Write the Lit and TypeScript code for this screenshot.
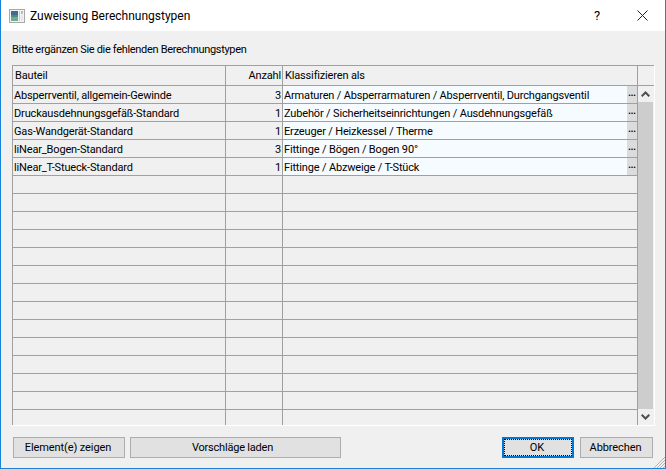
import { LitElement, html, css, svg } from "lit";
import { customElement } from "lit/decorators.js";

const ROWS: [string, string, string][] = [
  ["Absperrventil, allgemein-Gewinde", "3", "Armaturen / Absperrarmaturen / Absperrventil, Durchgangsventil"],
  ["Druckausdehnungsgefäß-Standard", "1", "Zubehör / Sicherheitseinrichtungen / Ausdehnungsgefäß"],
  ["Gas-Wandgerät-Standard", "1", "Erzeuger / Heizkessel / Therme"],
  ["liNear_Bogen-Standard", "3", "Fittinge / Bögen / Bogen 90°"],
  ["liNear_T-Stueck-Standard", "1", "Fittinge / Abzweige / T-Stück"],
];
const EMPTY = 14;

@customElement("app-root")
export class AppRoot extends LitElement {
  static styles = css`
    :host {
      display: block;
      width: 666px;
      height: 469px;
      font-family: Roboto, "Noto Sans", sans-serif;
      font-size: 11px;
      color: #000;
    }
    .window {
      position: relative;
      box-sizing: border-box;
      width: 666px;
      height: 469px;
      display: flex;
      flex-direction: column;
      background: #f0f0f0;
      border: 1px solid #1883d7;
      border-top: 0;
    }
    .titlebar {
      height: 31px;
      flex: none;
      background: #fff;
      display: flex;
      align-items: center;
      padding: 0 17px 0 8px;
    }
    .app-icon { width: 16px; height: 14px; flex: none; margin-right: 5px; }
    .title { flex: 1; font-size: 12px; white-space: nowrap; }
    .help { width: 12px; text-align: center; font-size: 13px; margin-right: 34px; }
    .close { width: 11px; height: 11px; flex: none; }
    .content {
      flex: 1;
      min-height: 0;
      display: flex;
      flex-direction: column;
      padding: 0 10px 10px 11px;
    }
    .hint {
      height: 34px;
      flex: none;
      display: flex;
      align-items: center;
      padding-top: 2px;
      box-sizing: border-box;
      letter-spacing: -0.32px;
      white-space: nowrap;
    }
    .table {
      width: 643px;
      height: 361px;
      flex: none;
      box-sizing: border-box;
      border-right: 1px solid #fff;
      border-bottom: 1px solid #fff;
      display: flex;
      flex-direction: column;
      overflow: hidden;
    }
    .header {
      display: grid;
      grid-template-columns: 213px 57px 355px 1fr;
      height: 21px;
      flex: none;
      box-sizing: border-box;
      border-top: 1px solid #a0a0a0;
      border-bottom: 1px solid #a0a0a0;
      border-left: 1px solid #a0a0a0;
    }
    .body { flex: 1; min-height: 0; display: flex; }
    .rows {
      width: 626px;
      flex: none;
      box-sizing: border-box;
      border-left: 1px solid #a0a0a0;
      overflow: hidden;
    }
    .row {
      display: grid;
      grid-template-columns: 213px 57px 355px;
      height: 18px;
    }
    .cell {
      box-sizing: border-box;
      border-right: 1px solid #a0a0a0;
      border-bottom: 1px solid #a0a0a0;
      line-height: 19px;
      letter-spacing: -0.16px;
      padding-left: 1px;
      white-space: nowrap;
      overflow: hidden;
    }
    .header .cell { border-bottom: 0; line-height: 19px; padding-left: 2px; }
    .header .cell:last-child { border-right: 0; }
    .num { text-align: right; padding: 0 1px 0 0; }
    .header .num { padding: 0 1px 0 0; }
    .value { background: #f6fbff; display: flex; padding-left: 1px; }
    .value span { flex: 1; overflow: hidden; }
    .dots {
      width: 10px;
      flex: none;
      background: #dcdcdc;
      text-align: center;
      line-height: 14px;
      font-size: 9px;
      font-weight: 700;
      letter-spacing: 0;
      font-family: "Liberation Sans", sans-serif;
    }
    .scrollbar {
      width: 16px;
      flex: none;
      display: flex;
      flex-direction: column;
    }
    .arrow { height: 16px; flex: none; display: flex; align-items: center; justify-content: center; padding-right: 1px; }
    .arrow svg { width: 9px; height: 6px; }
    .thumb { flex: 1; margin-right: 1px; background: #cdcdcd; }
    .buttons {
      margin-top: 11px;
      display: flex;
      padding: 0 2px 0 1px;
      height: 21px;
      flex: none;
    }
    button {
      box-sizing: border-box;
      height: 21px;
      padding: 0;
      margin: 0;
      background: #e1e1e1;
      border: 1px solid #adadad;
      font: inherit;
      letter-spacing: -0.1px;
      color: #000;
      line-height: 18px;
    }
    .b-show { width: 112px; margin-right: 5px; padding-right: 2px; }
    .b-load { width: 211px; padding-right: 6px; letter-spacing: -0.2px; }
    .spacer { flex: 1; }
    .b-ok {
      width: 72px;
      margin-right: 6px;
      padding-right: 2px;
      border: 2px solid #0078d7;
      outline: 1px dotted #000;
      outline-offset: -3px;
    }
    .b-cancel { width: 73px; padding-right: 2px; }
    .grip { position: absolute; right: 0; bottom: 0; width: 12px; height: 12px; }
  `;

  private cell(text: string, cls = "") {
    return html`<div class="cell ${cls}">${text}</div>`;
  }

  render() {
    const chevron = (d: string) => svg`<path d=${d} fill="none" stroke="#505050" stroke-width="2"/>`;
    return html`
      <div class="window">
        <div class="titlebar">
          <svg class="app-icon" viewBox="0 0 16 14">
            <rect x="0.5" y="0.5" width="15" height="13" fill="#f4f4f4" stroke="#a8a8a8" />
            <rect x="2" y="2" width="7" height="10" fill="#4f8a8f" />
            <rect x="2" y="2" width="7" height="4" fill="#3f6d92" />
            <rect x="2" y="8" width="7" height="4" fill="#6cae8f" />
            <rect x="10" y="2" width="1" height="10" fill="#c8c8c8" />
            <rect x="12" y="2" width="2" height="3" fill="#a9c7a0" />
            <rect x="12" y="6" width="2" height="6" fill="#dfe6e6" />
          </svg>
          <div class="title">Zuweisung Berechnungstypen</div>
          <div class="help">?</div>
          <svg class="close" viewBox="0 0 11 11">
            <path d="M0.5 0.5 L10.5 10.5 M10.5 0.5 L0.5 10.5" stroke="#222" stroke-width="1" fill="none" />
          </svg>
        </div>
        <div class="content">
          <div class="hint">Bitte ergänzen Sie die fehlenden Berechnungstypen</div>
          <div class="table">
            <div class="header">
              ${this.cell("Bauteil")}
              ${this.cell("Anzahl", "num")}
              ${this.cell("Klassifizieren als")}
              <div class="cell"></div>
            </div>
            <div class="body">
              <div class="rows">
                ${ROWS.map(
                  ([a, n, v]) => html`
                    <div class="row">
                      ${this.cell(a)}
                      ${this.cell(n, "num")}
                      <div class="cell value"><span>${v}</span><div class="dots">...</div></div>
                    </div>
                  `
                )}
                ${Array.from({ length: EMPTY }).map(
                  () => html`<div class="row">${this.cell("")}${this.cell("")}${this.cell("")}</div>`
                )}
              </div>
              <div class="scrollbar">
                <div class="arrow"><svg viewBox="0 0 9 6">${chevron("M0.7 5.3 L4.5 1.5 L8.3 5.3")}</svg></div>
                <div class="thumb"></div>
                <div class="arrow"><svg viewBox="0 0 9 6">${chevron("M0.7 0.7 L4.5 4.5 L8.3 0.7")}</svg></div>
              </div>
            </div>
          </div>
          <div class="buttons">
            <button class="b-show">Element(e) zeigen</button>
            <button class="b-load">Vorschläge laden</button>
            <div class="spacer"></div>
            <button class="b-ok">OK</button>
            <button class="b-cancel">Abbrechen</button>
          </div>
        </div>
        <svg class="grip" viewBox="0 0 12 12">
          <path d="M12 1 L1 12 M12 4 L4 12 M12 7 L7 12 M12 10 L10 12" stroke="#b4b4b4" stroke-width="1" fill="none" />
        </svg>
      </div>
    `;
  }
}
